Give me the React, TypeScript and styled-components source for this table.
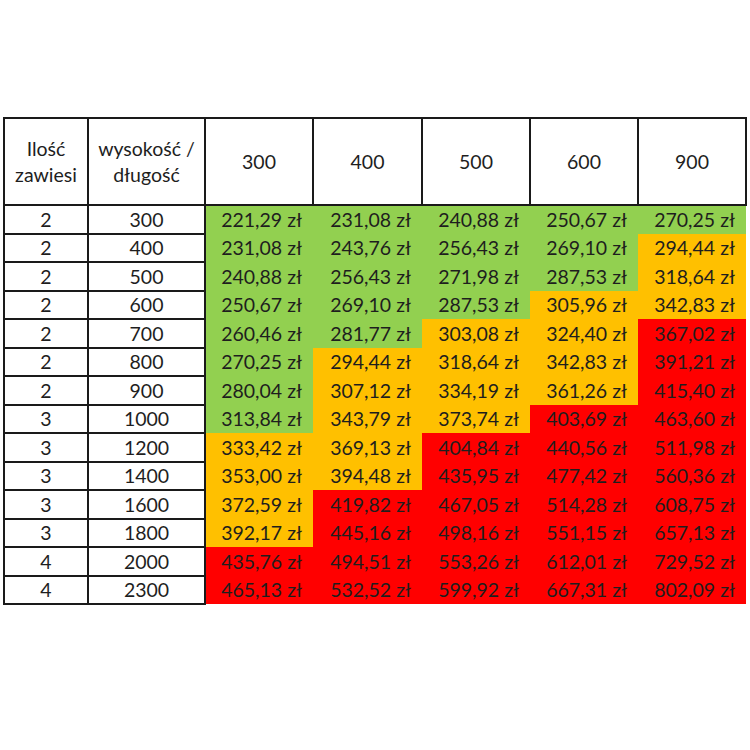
import React from "react";
import styled, { createGlobalStyle } from "styled-components";

const Global = createGlobalStyle`
  html, body { margin: 0; padding: 0; background: #ffffff; }
  body { font-family: Lato, "Noto Sans", sans-serif; color: #1e1e1e; }
`;

const Page = styled.div`
  width: 750px;
  height: 750px;
  padding: 117px 0 0 3px;
  box-sizing: border-box;
`;

const Table = styled.table`
  border-collapse: collapse;
  table-layout: fixed;
  width: 742px;
  font-size: 19.5px;
  line-height: 1.2;
`;

const HeadCell = styled.th`
  border: 2px solid #1a1a1a;
  height: 85px;
  padding: 0;
  font-weight: 400;
  line-height: 26px;
  text-align: center;
  vertical-align: middle;
`;

const KeyCell = styled.td`
  border: 2px solid #1a1a1a;
  height: 26.5px;
  padding: 0;
  text-align: center;
  vertical-align: middle;
`;

type Level = "g" | "o" | "r";
const colors: Record<Level, string> = {
  g: "#92d050",
  o: "#ffc000",
  r: "#ff0000",
};

const PriceCell = styled.td<{ $level: Level }>`
  background: ${(p) => colors[p.$level]};
  padding: 0 11px 0 0;
  text-align: right;
  vertical-align: middle;
  white-space: nowrap;
  border: none;
`;

const widths = [84, 117, 108, 109, 108, 108, 108];
const heads = ["300", "400", "500", "600", "900"];

const rows: [string, string, string[], string][] = [
  ["2", "300", ["221,29", "231,08", "240,88", "250,67", "270,25"], "ggggg"],
  ["2", "400", ["231,08", "243,76", "256,43", "269,10", "294,44"], "ggggo"],
  ["2", "500", ["240,88", "256,43", "271,98", "287,53", "318,64"], "ggggo"],
  ["2", "600", ["250,67", "269,10", "287,53", "305,96", "342,83"], "gggoo"],
  ["2", "700", ["260,46", "281,77", "303,08", "324,40", "367,02"], "ggoor"],
  ["2", "800", ["270,25", "294,44", "318,64", "342,83", "391,21"], "gooor"],
  ["2", "900", ["280,04", "307,12", "334,19", "361,26", "415,40"], "gooor"],
  ["3", "1000", ["313,84", "343,79", "373,74", "403,69", "463,60"], "goorr"],
  ["3", "1200", ["333,42", "369,13", "404,84", "440,56", "511,98"], "oorrr"],
  ["3", "1400", ["353,00", "394,48", "435,95", "477,42", "560,36"], "oorrr"],
  ["3", "1600", ["372,59", "419,82", "467,05", "514,28", "608,75"], "orrrr"],
  ["3", "1800", ["392,17", "445,16", "498,16", "551,15", "657,13"], "orrrr"],
  ["4", "2000", ["435,76", "494,51", "553,26", "612,01", "729,52"], "rrrrr"],
  ["4", "2300", ["465,13", "532,52", "599,92", "667,31", "802,09"], "rrrrr"],
];

export default function App() {
  return (
    <Page>
      <Global />
      <Table>
        <colgroup>
          {widths.map((w, i) => (
            <col key={i} style={{ width: w }} />
          ))}
        </colgroup>
        <thead>
          <tr>
            <HeadCell>
              Ilość
              <br />
              zawiesi
            </HeadCell>
            <HeadCell>
              wysokość /
              <br />
              długość
            </HeadCell>
            {heads.map((h) => (
              <HeadCell key={h}>{h}</HeadCell>
            ))}
          </tr>
        </thead>
        <tbody>
          {rows.map(([n, len, prices, lv], i) => (
            <tr key={i}>
              <KeyCell>{n}</KeyCell>
              <KeyCell>{len}</KeyCell>
              {prices.map((p, j) => (
                <PriceCell key={j} $level={lv[j] as Level}>
                  {p} zł
                </PriceCell>
              ))}
            </tr>
          ))}
        </tbody>
      </Table>
    </Page>
  );
}
